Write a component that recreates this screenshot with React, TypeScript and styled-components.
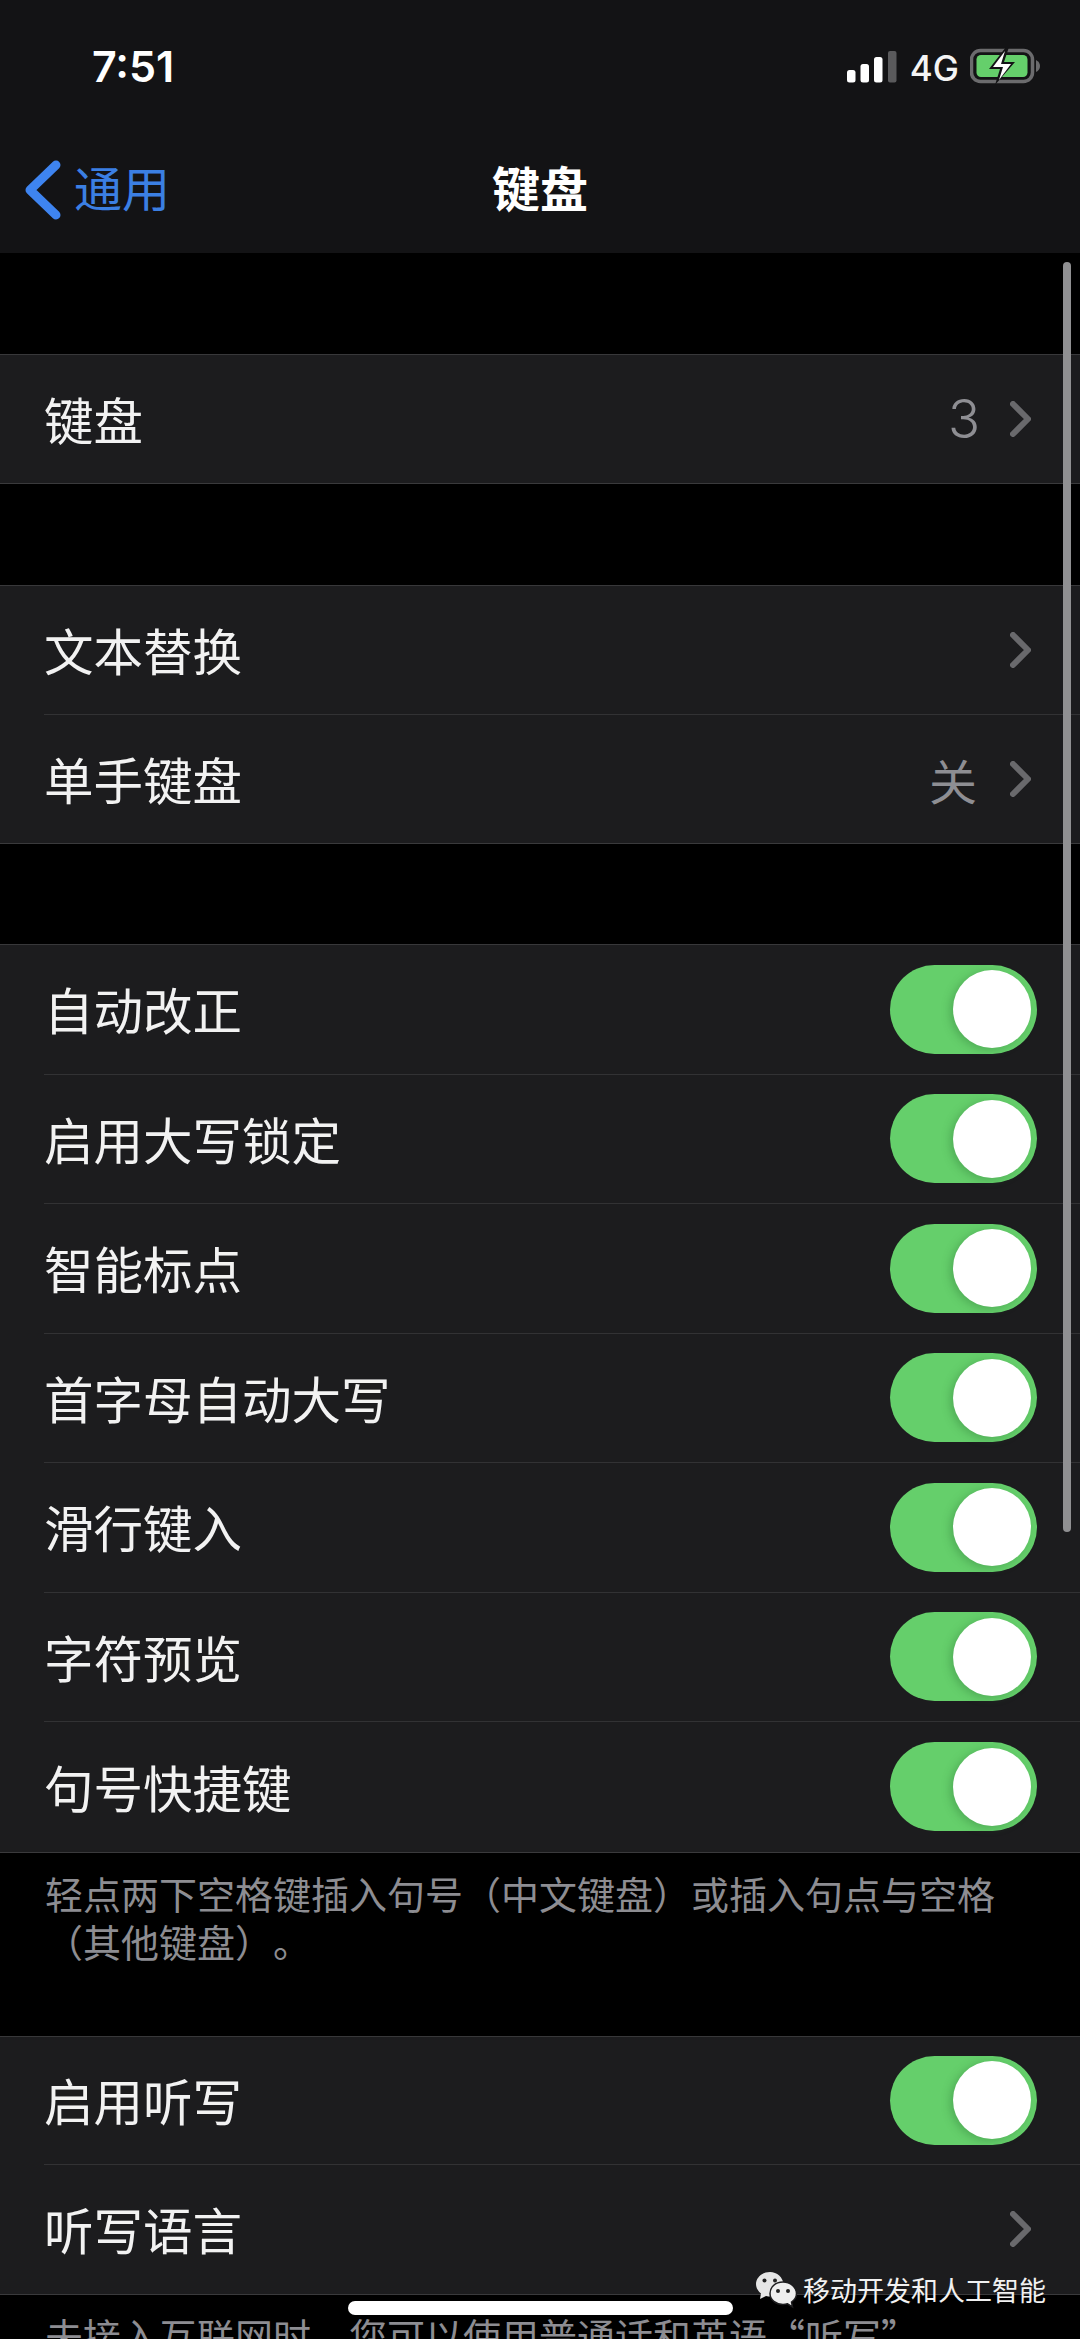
import React from "react";
import styled, { createGlobalStyle } from "styled-components";

const CJK = `"Noto Sans CJK SC", "Noto Sans", sans-serif`;

const Global = createGlobalStyle`
  html, body { margin: 0; padding: 0; background: #000; }
  body { width: 1080px; height: 2339px; overflow: hidden; font-family: ${CJK}; text-spacing-trim: space-all; }
  * { box-sizing: border-box; }
`;

const Page = styled.div`
  position: relative;
  width: 1080px;
  height: 2339px;
  overflow: hidden;
  background: #000;
  color: #f5f5f5;
`;

const Header = styled.header`
  height: 253px;
  background: #131315;
  display: flex;
  flex-direction: column;
`;

const StatusBar = styled.div`
  height: 132px;
  padding: 36px 39px 0 92px;
  display: flex;
  justify-content: space-between;
  align-items: flex-start;
`;

const Time = styled.span`
  font-family: Inter, sans-serif;
  font-size: 43px;
  font-weight: 600;
  line-height: 60px;
  color: #fff;
`;

const StatusIcons = styled.div`
  display: flex;
  align-items: center;
  height: 60px;
`;

const Network = styled.span`
  font-family: Inter, sans-serif;
  font-size: 35px;
  font-weight: 500;
  line-height: 60px;
  color: #f4f4f4;
  margin: 3px 11px 0 13px;
`;

const NavBar = styled.nav`
  flex: 1;
  display: grid;
  grid-template-columns: 1fr auto 1fr;
  align-items: start;
  padding: 28px 0 0 25px;
`;

const BackLink = styled.div`
  display: flex;
  align-items: flex-start;
  gap: 13px;
  color: #3b7fe3;
  font-size: 48px;
  line-height: 52px;
`;

const BackIcon = styled.svg`
  display: block;
  width: 36px;
  height: 60px;
  flex: none;
`;

const Title = styled.h1`
  margin: 0 0 0 -25px;
  font-size: 48px;
  line-height: 52px;
  font-weight: 700;
  color: #fff;
`;

const Group = styled.section<{ $gap: number }>`
  margin-top: ${(p) => p.$gap}px;
  background: #1c1c1e;
  border-top: 1px solid #38383a;
  border-bottom: 1px solid #3a3a3c;
`;

const Row = styled.div`
  padding-left: 44px;
  background: #1c1c1e;
`;

const RowInner = styled.div<{ $last: boolean; $height: number }>`
  height: ${(p) => p.$height}px;
  padding-right: 43px;
  display: flex;
  align-items: center;
  justify-content: space-between;
  border-bottom: ${(p) => (p.$last ? "0" : "1px solid #323234")};
`;

const Label = styled.span`
  font-size: 49.5px;
  line-height: 66px;
  color: #f2f2f2;
`;

const Accessory = styled.div`
  display: flex;
  align-items: center;
`;

const Value = styled.span`
  font-size: 48px;
  line-height: 66px;
  color: #8e8e93;
  margin-right: 33px;
  font-family: ${CJK};
`;

const DigitValue = styled(Value)`
  font-family: Inter, sans-serif;
  font-size: 53px;
  font-weight: 300;
  margin-right: 30px;
`;

const Chevron = styled.svg`
  display: block;
  width: 21px;
  height: 36px;
  margin-right: 6px;
`;

const Track = styled.div`
  width: 147px;
  height: 89px;
  border-radius: 45px;
  background: #65cf6b;
  display: flex;
  align-items: center;
  justify-content: flex-end;
  padding-right: 6px;
`;

const Knob = styled.div`
  width: 78px;
  height: 78px;
  border-radius: 50%;
  background: #fff;
  box-shadow: -3px 2px 8px rgba(40, 110, 50, 0.35);
`;

const Note = styled.p<{ $height: number }>`
  margin: 0;
  height: ${(p) => p.$height}px;
  padding: 16px 45px 0;
  font-size: 38px;
  line-height: 48px;
  color: #8d8d92;
`;

const ScrollThumb = styled.div`
  position: absolute;
  left: 1063px;
  top: 262px;
  width: 8px;
  height: 1270px;
  border-radius: 4px;
  background: #909092;
`;

const HomeBar = styled.div`
  position: absolute;
  left: 348px;
  top: 2301px;
  width: 385px;
  height: 14px;
  border-radius: 7px;
  background: #fff;
`;

const Watermark = styled.div`
  position: absolute;
  left: 755px;
  top: 2270px;
  display: flex;
  align-items: center;
  gap: 6px;
  font-size: 27px;
  line-height: 40px;
  color: #f1f1f1;
`;

const Chev = () => (
  <Chevron viewBox="0 0 21 36" aria-hidden>
    <path d="M3 3 L18 18 L3 33" fill="none" stroke="#69696c" strokeWidth="6" strokeLinecap="round" strokeLinejoin="round" />
  </Chevron>
);

const Toggle = () => (
  <Track>
    <Knob />
  </Track>
);

const Signal = () => (
  <svg width="50" height="33" viewBox="0 0 50 33" aria-hidden>
    <rect x="0" y="20" width="8.5" height="12.5" rx="2.5" fill="#fff" />
    <rect x="13.5" y="14" width="8.5" height="18.5" rx="2.5" fill="#fff" />
    <rect x="27" y="7" width="8.5" height="25.5" rx="2.5" fill="#fff" />
    <rect x="41" y="1" width="8.5" height="31.5" rx="2" fill="#5a5a5c" />
  </svg>
);

const Battery = () => (
  <svg width="71" height="38" viewBox="0 0 71 38" aria-hidden>
    <rect x="1.5" y="3.5" width="61" height="31" rx="9" fill="none" stroke="#6b6b6d" strokeWidth="3.5" />
    <rect x="6.5" y="8" width="51" height="22" rx="4.5" fill="#65cf6b" />
    <path d="M66 13 Q70 15 70 19 Q70 23 66 25 Z" fill="#6b6b6d" />
    <path d="M36 0 L19 22 L30 22 L25 38 L45 15 L34 15 L39 0 Z" fill="#131315" />
    <path d="M35 4 L23 20 L33 20 L29 33 L41 17 L31 17 Z" fill="#fff" />
  </svg>
);

const WeChat = () => (
  <svg width="42" height="38" viewBox="0 0 42 38" aria-hidden>
    <path d="M15 1 C7 1 1 6.5 1 13 C1 17 3 20 6 22.5 L5 28 L11 25 C12.5 25.4 14 25.6 16 25.6 C22 25 28 19 28.5 13 C28 6.5 22 1 15 1 Z" fill="#e6e6e6" />
    <circle cx="9.5" cy="9.5" r="2" fill="#222" />
    <circle cx="20" cy="9.5" r="2" fill="#222" />
    <path d="M28 11 C20 11 15 16.5 15 22.5 C15 29 21 33.5 28 33.5 C29.5 33.5 31 33.3 32.5 32.8 L37.5 36 L36.5 31 C39.8 28.8 41.5 26 41.5 22.5 C41.5 16.5 35.5 11 28 11 Z" fill="#eeeeee" stroke="#1c1c1e" strokeWidth="1.5" />
    <circle cx="23" cy="20" r="2" fill="#222" />
    <circle cx="33" cy="20" r="2" fill="#222" />
  </svg>
);

type Item = { label: string; value?: string; digit?: boolean; toggle?: boolean };

const SettingsGroup = ({ gap, rowHeight, items }: { gap: number; rowHeight: number; items: Item[] }) => (
  <Group $gap={gap}>
    {items.map((it, i) => (
      <Row key={it.label}>
        <RowInner $last={i === items.length - 1} $height={rowHeight}>
          <Label>{it.label}</Label>
          <Accessory>
            {it.toggle ? (
              <Toggle />
            ) : (
              <>
                {it.value && (it.digit ? <DigitValue>{it.value}</DigitValue> : <Value>{it.value}</Value>)}
                <Chev />
              </>
            )}
          </Accessory>
        </RowInner>
      </Row>
    ))}
  </Group>
);

export default function App() {
  return (
    <Page lang="zh-CN">
      <Global />
      <Header>
        <StatusBar>
          <Time>7:51</Time>
          <StatusIcons>
            <Signal />
            <Network>4G</Network>
            <Battery />
          </StatusIcons>
        </StatusBar>
        <NavBar>
          <BackLink>
            <BackIcon viewBox="0 0 36 60" aria-hidden>
              <path d="M31 5 L5 30 L31 55" fill="none" stroke="#3e84f0" strokeWidth="9" strokeLinecap="round" strokeLinejoin="round" />
            </BackIcon>
            <span>通用</span>
          </BackLink>
          <Title>键盘</Title>
          <span />
        </NavBar>
      </Header>

      <SettingsGroup gap={101} rowHeight={128} items={[{ label: "键盘", value: "3", digit: true }]} />
      <SettingsGroup
        gap={101}
        rowHeight={128.5}
        items={[{ label: "文本替换" }, { label: "单手键盘", value: "关" }]}
      />
      <SettingsGroup
        gap={100}
        rowHeight={129.5}
        items={[
          { label: "自动改正", toggle: true },
          { label: "启用大写锁定", toggle: true },
          { label: "智能标点", toggle: true },
          { label: "首字母自动大写", toggle: true },
          { label: "滑行键入", toggle: true },
          { label: "字符预览", toggle: true },
          { label: "句号快捷键", toggle: true },
        ]}
      />
      <Note $height={183}>轻点两下空格键插入句号（中文键盘）或插入句点与空格（其他键盘）。</Note>
      <SettingsGroup
        gap={0}
        rowHeight={128.5}
        items={[{ label: "启用听写", toggle: true }, { label: "听写语言" }]}
      />
      <Note $height={120}>未接入互联网时，您可以使用普通话和英语“听写”。</Note>

      <ScrollThumb />
      <HomeBar />
      <Watermark>
        <WeChat />
        <span>移动开发和人工智能</span>
      </Watermark>
    </Page>
  );
}
